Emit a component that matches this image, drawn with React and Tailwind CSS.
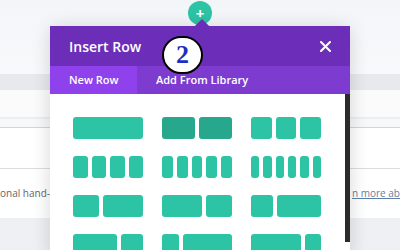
const layouts = [
  [[1], [1, 1], [1, 1, 1]],
  [[1, 1, 1, 1], [1, 1, 1, 1, 1], [1, 1, 1, 1, 1, 1]],
  [[2, 3], [3, 2], [1, 2]],
  [[2, 1], [1, 3], [3, 1]],
];

function Layout({ parts, hover }) {
  return (
    <div className="flex gap-[4px] h-[22px] w-[70px]">
      {parts.map((p, i) => (
        <div
          key={i}
          className={`rounded-[3px] ${hover ? 'bg-[#27a88d]' : 'bg-[#2dc4a5]'}`}
          style={{ flexGrow: p, flexBasis: 0 }}
        />
      ))}
    </div>
  );
}

export default function App() {
  return (
    <div className="relative w-[400px] h-[250px] overflow-hidden bg-white" style={{ fontFamily: '"Open Sans", sans-serif' }}>
      {/* page behind the modal */}
      <div className="flex flex-col">
        <div className="h-[74px] bg-gradient-to-b from-[#f3f6f9] to-[#f8f9fb]" />
        <div className="h-[16px] bg-[#e8e9ec]" />
        <div className="h-[27px] bg-[#fbfbfc]" />
        <div className="h-[2px] bg-[#eceef0]" />
        <div className="h-[8px] bg-[#f7f8fa]" />
        <div className="h-[1px] bg-[#d3d5d8]" />
        <div className="h-[40px] bg-white" />
        <div className="h-[1px] bg-[#dadcdf]" />
        <div className="h-[49px] bg-white flex items-center text-[10px] whitespace-nowrap">
          <div className="w-[352px] shrink-0 overflow-hidden text-[#666]">onal hand-crafted layouts from our library.</div>
          <div className="text-[#5f7fa6] underline">n more about</div>
        </div>
        <div className="h-[32px] bg-[#eef0f3]" />
      </div>

      {/* add button */}
      <div className="absolute left-[188px] top-[1px] w-[24px] h-[24px] rounded-full bg-[#2dc4a5] flex items-center justify-center text-white text-[15px] font-bold leading-none">+</div>

      {/* modal */}
      <div className="absolute left-[50px] top-[26px] w-[300px] h-[230px] flex flex-col shadow-[0_2px_18px_rgba(0,0,0,0.16)]">
        <div className="absolute left-[147px] top-[-5px] w-[10px] h-[10px] rotate-45 bg-[#6c2eb9]" />
        <div className="relative h-[44px] bg-[#6c2eb9] flex items-center justify-between pl-[19px] pr-[19px] text-white">
          <span className="text-[14px] font-semibold">Insert Row</span>
          <svg width="11" height="11" viewBox="0 0 11 11">
            <path d="M1 1L10 10M10 1L1 10" stroke="white" strokeWidth="2" strokeLinecap="round" />
          </svg>
        </div>
        <div className="h-[30px] bg-[#7e3bd0] flex text-white text-[11px] font-semibold">
          <div className="w-[87px] bg-[#8f42ec] flex items-center pl-[19px]">New Row</div>
          <div className="flex items-center pl-[19px]">Add From Library</div>
        </div>
        <div className="flex-1 bg-white flex">
          <div className="flex-1 pl-[23px] pt-[23px]">
            <div className="grid grid-cols-[70px_70px_70px] gap-x-[19px] gap-y-[17px]">
              {layouts.flatMap((row, r) =>
                row.map((parts, c) => <Layout key={`${r}-${c}`} parts={parts} hover={r === 0 && c === 1} />)
              )}
            </div>
          </div>
          <div className="w-[5px] h-[148px] bg-[#2b2b2b]" />
        </div>
      </div>

      {/* annotation marker */}
      <div className="absolute left-[162px] top-[36px] w-[41px] h-[38px] rounded-full border-2 border-black bg-white flex items-center justify-center">
        <span className="text-[26px] font-bold text-[#1c2fc4] leading-none" style={{ fontFamily: '"Liberation Serif", serif' }}>2</span>
      </div>
    </div>
  );
}
